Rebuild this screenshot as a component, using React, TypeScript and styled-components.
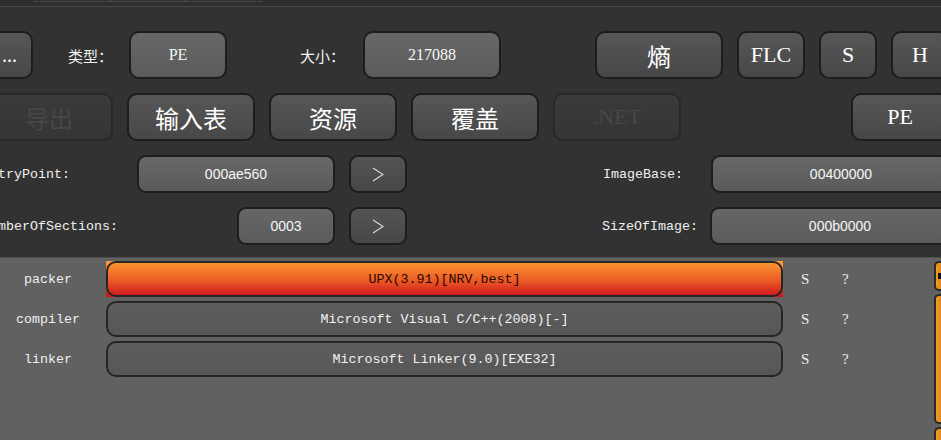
import React from "react";
import styled, { createGlobalStyle, css } from "styled-components";

const Global = createGlobalStyle`
  html, body { margin: 0; padding: 0; background: #323232; }
  body { width: 941px; height: 440px; overflow: hidden; }
  #root { width: 941px; height: 440px; }
`;

const Window = styled.div`
  width: 941px;
  height: 440px;
  overflow: hidden;
  display: flex;
  flex-direction: column;
  background: #323232;
  color: #f2f2f2;
  font-family: "Liberation Mono", "Noto Sans CJK SC", monospace;
`;

const TabStrip = styled.div`
  flex: none;
  height: 6px;
  display: flex;
  align-items: flex-start;
  padding-left: 34px;
  background: #2e2e2e;
  border-bottom: 1px solid #474747;
`;

const StripTab = styled.div`
  width: 74px;
  height: 1px;
  border: 1px solid #484848;
  border-top: none;
`;

const Header = styled.div`
  flex: none;
  display: flex;
  flex-direction: column;
  gap: 14px;
  padding: 24px 0 12px;
`;

const Row = styled.div<{ $x: number; $h: number }>`
  display: flex;
  align-items: center;
  height: ${(p) => p.$h}px;
  margin-left: ${(p) => p.$x}px;
`;

const raised = css`
  box-sizing: border-box;
  flex: none;
  display: flex;
  align-items: center;
  justify-content: center;
  border: 2px solid #1d1d1d;
  white-space: nowrap;
`;

const ActionButton = styled.div<{ $w: number; $ml?: number; $off?: boolean; $size?: number }>`
  ${raised};
  width: ${(p) => p.$w}px;
  height: 48px;
  margin-left: ${(p) => p.$ml ?? 0}px;
  border-radius: 10px;
  border-color: ${(p) => (p.$off ? "#282828" : "#1d1d1d")};
  background: ${(p) =>
    p.$off ? "linear-gradient(#3a3a3a, #353535)" : "linear-gradient(#575757, #474747)"};
  color: ${(p) => (p.$off ? "#474747" : "#ffffff")};
  font-family: "Liberation Serif", "Noto Sans CJK SC", serif;
  font-size: ${(p) => p.$size ?? 22}px;
`;

const DotsButton = styled(ActionButton)`
  justify-content: flex-end;
  padding-right: 14px;
`;

const ValueField = styled.div<{ $w: number; $h: number; $ml?: number; $serif?: boolean }>`
  ${raised};
  width: ${(p) => p.$w}px;
  height: ${(p) => p.$h}px;
  margin-left: ${(p) => p.$ml ?? 0}px;
  border-radius: ${(p) => (p.$h > 40 ? 10 : 9)}px;
  background: linear-gradient(#676767, #5b5b5b);
  color: #f6f6f6;
  font-family: ${(p) =>
    p.$serif ? `"Liberation Serif", serif` : `"Liberation Sans", sans-serif`};
  font-size: ${(p) => (p.$serif ? 16 : 14)}px;
`;

const ArrowButton = styled.div`
  ${raised};
  width: 58px;
  height: 38px;
  margin-left: 14px;
  border-radius: 9px;
  background: linear-gradient(#545454, #474747);
`;

const CnLabel = styled.span<{ $w: number; $ml: number }>`
  flex: none;
  width: ${(p) => p.$w}px;
  margin-left: ${(p) => p.$ml}px;
  font-family: "Noto Sans CJK SC", sans-serif;
  font-size: 15px;
  color: #f4f4f4;
`;

const LeftPair = styled.div`
  flex: none;
  width: 425px;
  display: flex;
  align-items: center;
`;

const KeyLabel = styled.span<{ $w?: number; $ml?: number }>`
  flex: ${(p) => (p.$w ? "none" : "1")};
  width: ${(p) => (p.$w ? `${p.$w}px` : "auto")};
  margin-left: ${(p) => p.$ml ?? 0}px;
  font-size: 13.33px;
  color: #f0f0f0;
  white-space: nowrap;
`;

const Lower = styled.div`
  flex: 1;
  display: flex;
  align-items: flex-start;
  padding-top: 3px;
  background: #616161;
  border-top: 1px solid #4f4f4f;
`;

const Results = styled.div`
  display: flex;
  flex-direction: column;
  gap: 4px;
`;

const ResultRow = styled.div`
  display: flex;
  align-items: center;
  height: 36px;
`;

const TypeLabel = styled.span`
  width: 96px;
  margin-right: 10px;
  text-align: center;
  font-size: 13.33px;
  color: #f0f0f0;
`;

const BarSlot = styled.div<{ $hot?: boolean }>`
  width: 677px;
  height: 36px;
  background: ${(p) =>
    p.$hot ? "linear-gradient(#ff9a33, #ea5a24 55%, #cc121f)" : "transparent"};
`;

const Bar = styled.div<{ $hot?: boolean }>`
  box-sizing: border-box;
  height: 100%;
  display: flex;
  align-items: center;
  justify-content: center;
  border: 2px solid #252525;
  border-radius: 10px;
  background: ${(p) => (p.$hot ? "transparent" : "linear-gradient(#5e5e5e, #565656)")};
  color: ${(p) => (p.$hot ? "#2a0505" : "#f2f2f2")};
  font-size: 13.33px;
  white-space: nowrap;
`;

const Flag = styled.span<{ $ml: number }>`
  width: 8px;
  margin-left: ${(p) => p.$ml}px;
  font-family: "Liberation Serif", serif;
  font-size: 15px;
  color: #f0f0f0;
`;

const ScrollTrack = styled.div`
  margin-left: auto;
  width: 7px;
  display: flex;
  flex-direction: column;
  gap: 3px;
`;

const ScrollPiece = styled.div<{ $h: number }>`
  box-sizing: border-box;
  height: ${(p) => p.$h}px;
  border: 2px solid #2a2a2a;
  border-right: none;
  border-radius: 5px 0 0 5px;
  background: linear-gradient(90deg, #f39a26, #e08a1c);
  display: flex;
  align-items: center;
  justify-content: flex-end;
`;

const ScrollMark = styled.div`
  width: 3px;
  height: 6px;
  background: #111;
`;

const Chevron = () => (
  <svg width="12" height="15" viewBox="0 0 12 15">
    <polyline points="1,1 11,7.5 1,14" fill="none" stroke="#d4dbe6" strokeWidth="1.1" />
  </svg>
);

const results = [
  { type: "packer", text: "UPX(3.91)[NRV,best]", hot: true },
  { type: "compiler", text: "Microsoft Visual C/C++(2008)[-]" },
  { type: "linker", text: "Microsoft Linker(9.0)[EXE32]" },
];

export default function App() {
  return (
    <Window>
      <Global />
      <TabStrip>
        <StripTab />
        <StripTab />
        <StripTab />
      </TabStrip>
      <Header>
        <Row $x={-95} $h={48}>
          <DotsButton $w={128} $size={20}>...</DotsButton>
          <CnLabel $w={61} $ml={35}>类型：</CnLabel>
          <ValueField $w={98} $h={48} $serif>PE</ValueField>
          <CnLabel $w={63} $ml={73}>大小：</CnLabel>
          <ValueField $w={138} $h={48} $serif>217088</ValueField>
          <ActionButton $w={128} $ml={94} $size={24}>熵</ActionButton>
          <ActionButton $w={68} $ml={14}>FLC</ActionButton>
          <ActionButton $w={58} $ml={14}>S</ActionButton>
          <ActionButton $w={58} $ml={14}>H</ActionButton>
        </Row>
        <Row $x={-15} $h={48}>
          <ActionButton $w={128} $off $size={24}>导出</ActionButton>
          <ActionButton $w={128} $ml={14} $size={24}>输入表</ActionButton>
          <ActionButton $w={128} $ml={14} $size={24}>资源</ActionButton>
          <ActionButton $w={128} $ml={14} $size={24}>覆盖</ActionButton>
          <ActionButton $w={128} $ml={14} $off>.NET</ActionButton>
          <ActionButton $w={98} $ml={170}>PE</ActionButton>
        </Row>
        <Row $x={-18} $h={38}>
          <LeftPair>
            <KeyLabel>EntryPoint:</KeyLabel>
            <ValueField $w={198} $h={38}>000ae560</ValueField>
            <ArrowButton><Chevron /></ArrowButton>
          </LeftPair>
          <KeyLabel $w={108} $ml={196}>ImageBase:</KeyLabel>
          <ValueField $w={260} $h={38}>00400000</ValueField>
        </Row>
        <Row $x={-18} $h={38}>
          <LeftPair>
            <KeyLabel>NumberOfSections:</KeyLabel>
            <ValueField $w={98} $h={38}>0003</ValueField>
            <ArrowButton><Chevron /></ArrowButton>
          </LeftPair>
          <KeyLabel $w={108} $ml={195}>SizeOfImage:</KeyLabel>
          <ValueField $w={260} $h={38}>000b0000</ValueField>
        </Row>
      </Header>
      <Lower>
        <Results>
          {results.map((r) => (
            <ResultRow key={r.type}>
              <TypeLabel>{r.type}</TypeLabel>
              <BarSlot $hot={r.hot}>
                <Bar $hot={r.hot}>{r.text}</Bar>
              </BarSlot>
              <Flag $ml={18}>S</Flag>
              <Flag $ml={33}>?</Flag>
            </ResultRow>
          ))}
        </Results>
        <ScrollTrack>
          <ScrollPiece $h={30}>
            <ScrollMark />
          </ScrollPiece>
          <ScrollPiece $h={130} />
          <ScrollPiece $h={30} />
        </ScrollTrack>
      </Lower>
    </Window>
  );
}
